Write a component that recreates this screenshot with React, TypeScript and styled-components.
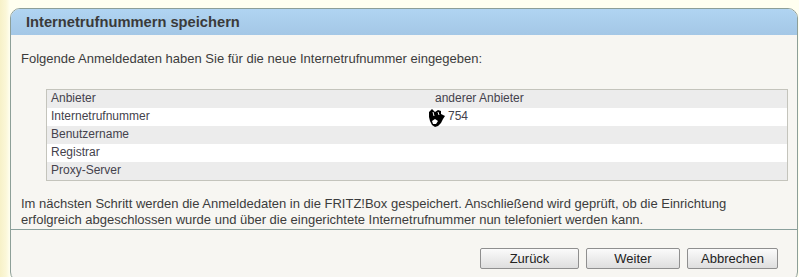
import styled, { createGlobalStyle } from "styled-components";

const GlobalStyle = createGlobalStyle`
  html, body {
    margin: 0;
    padding: 0;
  }
  body {
    background: linear-gradient(to right, #f7f1c8 0px, #fbf7d8 6px, #fffff0 10px, #fffff0 100%);
    font-family: "Liberation Sans", Arial, sans-serif;
    color: #3c3c3c;
    overflow: hidden;
  }
`;

const rows = [
  { label: "Anbieter", value: "anderer Anbieter" },
  { label: "Internetrufnummer", value: "754", cursor: true },
  { label: "Benutzername", value: "" },
  { label: "Registrar", value: "" },
  { label: "Proxy-Server", value: "" },
];

// mouse pointer that sits over the number in the screenshot
const Cursor = () => (
  <CursorIcon width="18" height="20" viewBox="0 0 18 20">
    <path
      d="M1 4 L4 1 L7 4 L10 2 L13 3 L13 6 L17 8 L15 11 L13 15 L10 18 L7 19 L4 17 L2 13 L1 9 Z"
      fill="#000"
    />
    <path d="M4 13 L7 11 L10 13 L8 16 L5 16 Z" fill="#fff" />
    <path d="M5 4 L6 8 M10 4 L11 7" stroke="#fff" strokeWidth="1" />
  </CursorIcon>
);

export default function App() {
  return (
    <>
      <GlobalStyle />
      <Panel>
        <Header>Internetrufnummern speichern</Header>
        <Content>
          <Intro>Folgende Anmeldedaten haben Sie für die neue Internetrufnummer eingegeben:</Intro>
          <Table>
            {rows.map((r, i) => (
              <Row key={r.label} $odd={i % 2 === 0}>
                <Cell>{r.label}</Cell>
                <ValueCell>
                  {r.cursor && <Cursor />}
                  {r.cursor ? <Indented>{r.value}</Indented> : r.value}
                </ValueCell>
              </Row>
            ))}
          </Table>
          <Note>
            Im nächsten Schritt werden die Anmeldedaten in die FRITZ!Box gespeichert. Anschließend wird geprüft, ob die Einrichtung
            <br />
            erfolgreich abgeschlossen wurde und über die eingerichtete Internetrufnummer nun telefoniert werden kann.
          </Note>
        </Content>
        <Footer>
          <Button $w={99}>Zurück</Button>
          <Button $w={94}>Weiter</Button>
          <Button $w={91}>Abbrechen</Button>
        </Footer>
      </Panel>
    </>
  );
}

const Panel = styled.div`
  margin: 8px 0 0 10px;
  width: 786px;
  height: 272px;
  border: 1px solid #8d9f98;
  border-radius: 10px;
  overflow: hidden;
  background: #f7f6f2;
  display: flex;
  flex-direction: column;
`;

const Header = styled.div`
  height: 26px;
  box-sizing: border-box;
  padding: 4px 0 0 15px;
  background: linear-gradient(to bottom, #b0d4f2, #a4c7e6);
  font-size: 14.7px;
  font-weight: bold;
  color: #3a3a3a;
  line-height: 18px;
`;

const Content = styled.div`
  padding: 15px 10px 0 10px;
  border-bottom: 1px solid #8aa09c;
  height: 195px;
  box-sizing: border-box;
`;

const Intro = styled.div`
  font-size: 13px;
  line-height: 17px;
  color: #3c3c3c;
`;

const Table = styled.div`
  margin: 22px 0 0 25px;
  width: 742px;
  box-sizing: border-box;
  border: 1px solid #c4c4bc;
`;

const Row = styled.div<{ $odd: boolean }>`
  display: grid;
  grid-template-columns: 384px 1fr;
  height: 18px;
  background: ${({ $odd }) => ($odd ? "#ececec" : "#ffffff")};
`;

const Cell = styled.div`
  padding-left: 4px;
  font-size: 12px;
  line-height: 17px;
  color: #44424c;
`;

const ValueCell = styled(Cell)`
  position: relative;
`;

const Indented = styled.span`
  padding-left: 13px;
`;

const CursorIcon = styled.svg`
  position: absolute;
  left: -3px;
  top: 0;
`;

const Note = styled.div`
  margin-top: 15px;
  font-size: 13px;
  line-height: 16px;
  color: #3c3c3c;
`;

const Footer = styled.div`
  display: flex;
  justify-content: flex-end;
  gap: 7px;
  padding: 18px 19px 0 0;
`;

const Button = styled.button<{ $w: number }>`
  width: ${({ $w }) => $w}px;
  height: 21px;
  padding: 0;
  border: 1px solid #8f8f8f;
  border-radius: 2px;
  background: linear-gradient(to bottom, #fbfbfb, #dedede);
  font-family: "Liberation Sans", Arial, sans-serif;
  font-size: 13px;
  color: #222;
`;
